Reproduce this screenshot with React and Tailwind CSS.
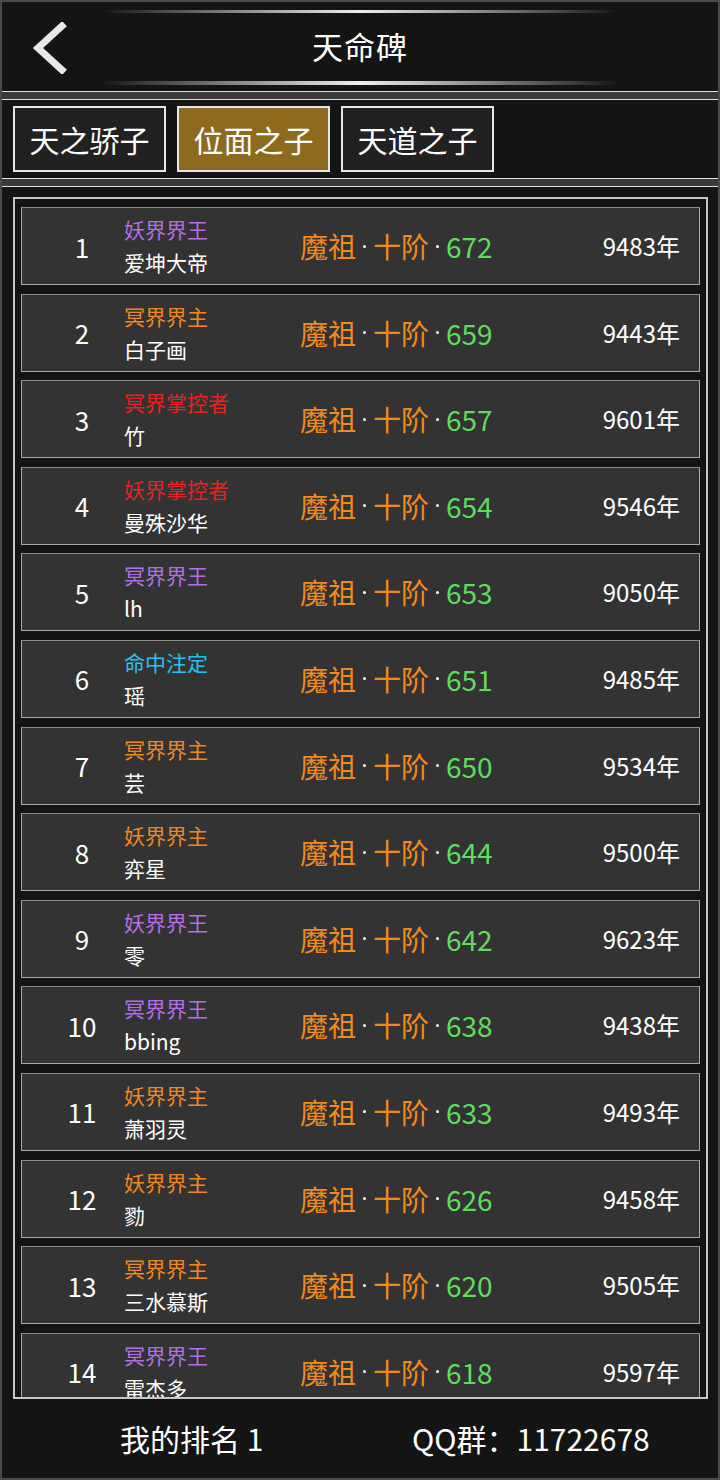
import React from "react";

const PURPLE = "text-[#b56ee8]";
const ORANGE = "text-[#f0881e]";
const RED = "text-[#e8231f]";
const CYAN = "text-[#22c3ee]";

const rows = [
  [1, "妖界界王", PURPLE, "爱坤大帝", 672, 9483],
  [2, "冥界界主", ORANGE, "白子画", 659, 9443],
  [3, "冥界掌控者", RED, "竹", 657, 9601],
  [4, "妖界掌控者", RED, "曼殊沙华", 654, 9546],
  [5, "冥界界王", PURPLE, "lh", 653, 9050],
  [6, "命中注定", CYAN, "瑶", 651, 9485],
  [7, "冥界界主", ORANGE, "芸", 650, 9534],
  [8, "妖界界主", ORANGE, "弈星", 644, 9500],
  [9, "妖界界王", PURPLE, "零", 642, 9623],
  [10, "冥界界王", PURPLE, "bbing", 638, 9438],
  [11, "妖界界主", ORANGE, "萧羽灵", 633, 9493],
  [12, "妖界界主", ORANGE, "勠", 626, 9458],
  [13, "冥界界主", ORANGE, "三水慕斯", 620, 9505],
  [14, "冥界界王", PURPLE, "雷杰多", 618, 9597],
];

function Separator() {
  return <div className="h-[9px] shrink-0 border-y border-[#e0e0e0] bg-[#3a3a3a]" />;
}

function Tab({ label, active }) {
  return (
    <div
      className={
        "w-[153px] h-[66px] border-2 border-[#e6e6e6] flex items-center justify-center text-[30px] text-white " +
        (active ? "bg-[#8d6a1e]" : "bg-[#212121]")
      }
    >
      {label}
    </div>
  );
}

function Dot() {
  return (
    <span className="w-[17px] flex justify-center">
      <span className="w-[3px] h-[3px] rounded-full bg-white" />
    </span>
  );
}

function Row({ r }) {
  const [rank, title, color, name, lv, year] = r;
  return (
    <div className="h-[78px] shrink-0 flex items-center bg-[#333333] border border-[#a8a8a8] border-t-[#8a8a8a]">
      <div className="w-[102px] pl-[18px] text-center text-[26px] text-white">{rank}</div>
      <div className="w-[176px] flex flex-col justify-center">
        <div className={"text-[21px] leading-[33px] whitespace-nowrap " + color}>{title}</div>
        <div className="text-[21px] leading-[33px] text-white whitespace-nowrap">{name}</div>
      </div>
      <div className="flex-1 flex items-center text-[28px] leading-[40px]">
        <span className="text-[#f08a1c]">魔祖</span>
        <Dot />
        <span className="text-[#f08a1c]">十阶</span>
        <Dot />
        <span className="text-[#5edc5b]">{lv}</span>
      </div>
      <div className="pr-[19px] text-[24px] text-white">{year}年</div>
    </div>
  );
}

export default function App() {
  return (
    <div
      className="w-[720px] h-[1480px] bg-[#141414] border-2 border-[#4a4a4a] flex flex-col overflow-hidden"
      style={{ fontFamily: '"Noto Sans CJK SC", "Noto Sans", sans-serif' }}
    >
      <header className="relative h-[89px] shrink-0 flex items-center justify-center">
        <div className="absolute top-[8px] left-[98px] right-[98px] h-[3px] bg-gradient-to-r from-transparent via-[#f0f0f0] to-transparent" />
        <div className="absolute bottom-[6px] left-[98px] right-[98px] h-[4px] bg-gradient-to-r from-transparent via-[#f0f0f0] to-transparent" />
        <svg className="absolute left-[28px] top-[20px]" width="40" height="52" viewBox="0 0 40 52">
          <path d="M32 4 L8 26 L32 48" fill="none" stroke="#e8e8e8" strokeWidth="7" strokeLinecap="square" strokeLinejoin="miter" />
        </svg>
        <div className="text-[31px] text-white tracking-[1px]">天命碑</div>
      </header>
      <Separator />
      <div className="h-[78px] shrink-0 flex items-center gap-[11px] pl-[11px]">
        <Tab label="天之骄子" />
        <Tab label="位面之子" active />
        <Tab label="天道之子" />
      </div>
      <Separator />
      <div className="mt-[10px] ml-[11px] w-[695px] h-[1202px] shrink-0 border-2 border-[#c8c8c8] overflow-hidden px-[6px] pt-[8px] flex flex-col gap-[8.6px]">
        {rows.map((r) => (
          <Row key={r[0]} r={r} />
        ))}
      </div>
      <footer className="flex-1 flex items-center text-[30px] text-white">
        <div className="pl-[118px] w-[410px]">我的排名 1</div>
        <div>QQ群：11722678</div>
      </footer>
    </div>
  );
}
